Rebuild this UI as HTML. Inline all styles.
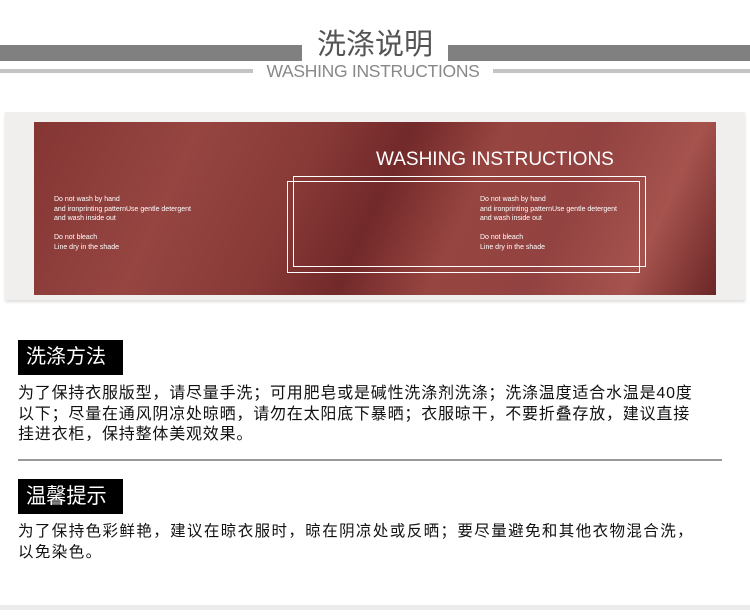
<!DOCTYPE html>
<html><head><meta charset="utf-8"><style>
*{margin:0;padding:0;box-sizing:border-box}
body{width:750px;height:616px;background:#fff;position:relative;overflow:hidden;font-family:"Liberation Sans","Noto Sans CJK SC",sans-serif}
.a{position:absolute}
.t{color:#fff;font-size:7px;line-height:9.5px;white-space:nowrap}
.lab{background:#000;color:#fff;font-size:20px;line-height:35px;padding-left:8px;white-space:nowrap}
.p{color:#111;font-size:16px;line-height:20.5px;white-space:nowrap;letter-spacing:0.8px}
</style></head><body>
<div class="a" style="left:0;top:45px;width:302px;height:16px;background:#808080"></div>
<div class="a" style="left:448px;top:45px;width:302px;height:16px;background:#808080"></div>
<div class="a" style="left:0;top:69px;width:253px;height:4px;background:#c4c4c4"></div>
<div class="a" style="left:493px;top:69px;width:257px;height:4px;background:#c4c4c4"></div>
<div class="a" style="left:305px;top:27px;width:140px;text-align:center;font-size:29px;line-height:36px;color:#555">洗涤说明</div>
<div class="a" style="left:253px;top:62px;width:240px;text-align:center;font-size:17.5px;line-height:19px;color:#888;letter-spacing:-0.3px">WASHING INSTRUCTIONS</div>

<div class="a" style="left:5px;top:112px;width:740px;height:188px;background:#f1eeee;box-shadow:0 2px 3px #ddd"></div>
<div class="a" style="left:34px;top:122px;width:682px;height:173px;background:linear-gradient(115deg,#843634 0%,#964541 22%,#883a37 38%,#72292a 50%,#974540 62%,#924240 75%,#a6534e 88%,#6a2626 100%)"></div>
<div class="a" style="left:287px;top:181px;width:353px;height:92px;border:1.5px solid #fff"></div>
<div class="a" style="left:293px;top:176px;width:353px;height:91px;border:1.5px solid #fff"></div>
<div class="a" style="left:376px;top:149px;color:#fff;font-size:19px;line-height:22px">WASHING INSTRUCTIONS</div>
<div class="a t" style="left:54px;top:195px">Do not wash by hand<br>and ironprinting patternUse gentle detergent<br>and wash inside out<br><br>Do not bleach<br>Line dry in the shade</div>
<div class="a t" style="left:480px;top:195px">Do not wash by hand<br>and ironprinting patternUse gentle detergent<br>and wash inside out<br><br>Do not bleach<br>Line dry in the shade</div>

<div class="a lab" style="left:18px;top:340px;width:105px">洗涤方法</div>
<div class="a p" style="left:18px;top:384px">为了保持衣服版型，请尽量手洗；可用肥皂或是碱性洗涤剂洗涤；洗涤温度适合水温是40度<br>以下；尽量在通风阴凉处晾晒，请勿在太阳底下暴晒；衣服晾干，不要折叠存放，建议直接<br>挂进衣柜，保持整体美观效果。</div>
<div class="a" style="left:18px;top:459px;width:704px;height:2px;background:#999"></div>

<div class="a" style="left:18px;top:479px;width:105px;height:35px;background:#000"></div>
<div class="a" style="left:26px;top:479px;color:#fff;font-size:21px;line-height:35px;white-space:nowrap;transform:scaleX(.96);transform-origin:0 0">温馨提示</div>
<div class="a p" style="left:18px;top:522px;font-size:15.5px;letter-spacing:1.4px">为了保持色彩鲜艳，建议在晾衣服时，晾在阴凉处或反晒；要尽量避免和其他衣物混合洗，<br>以免染色。</div>
<div class="a" style="left:0;top:605px;width:750px;height:5px;background:#ececec"></div>
</body></html>
